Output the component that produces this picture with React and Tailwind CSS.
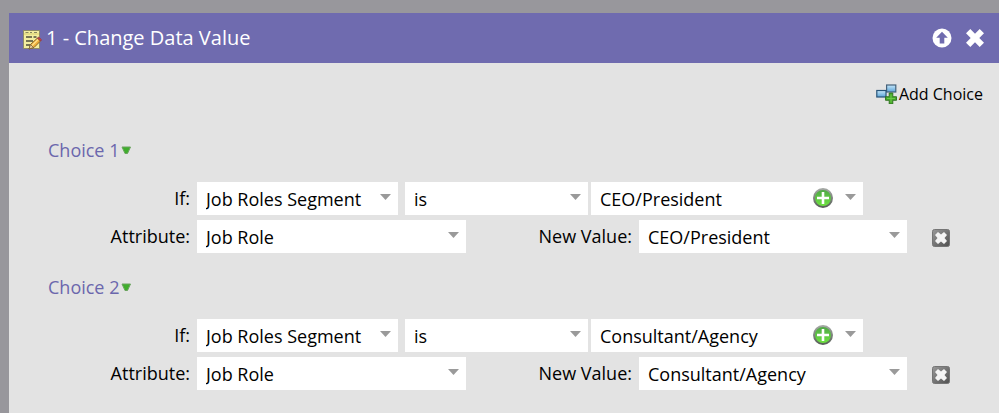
import { useId } from "react";

function NoteIcon() {
  return (
    <svg width="20" height="22" viewBox="0 0 20 22" aria-hidden="true" className="mt-1 shrink-0">
      <rect x="1.5" y="1.5" width="16" height="18" fill="#f4ee9f" stroke="#8f8b68" />
      <path d="M2 5h15" stroke="#e6de86" strokeWidth="2" />
      <path d="M3.500 3.500h3M8 3.500h2M12 3.500h3" stroke="#87865c" />
      <path d="M4 8h6M11.500 8h3M4 12h7M4 16h4" stroke="#4e4e3c" strokeWidth="1.600" />
      <path d="M7 20l1.500-4.500L15.500 9l3 3L12 18.500z" fill="#eeb03c" stroke="#8a6423" />
      <path d="M10 16.500l6-6" stroke="#ffe18a" strokeWidth="1.500" />
      <path d="M7 20l1.500-4.500 3 3z" fill="#ecd0a0" stroke="#6b5630" strokeWidth=".7" />
      <path d="M15.500 9l1.300-.8 2.700 2.600-1 1.200z" fill="#d8453e" stroke="#963b48" />
    </svg>
  );
}

function AddChoiceIcon() {
  const id = useId();
  return (
    <svg width="21" height="20" viewBox="0 0 21 20" aria-hidden="true" className="shrink-0">
      <defs>
        <linearGradient id={id} x2="0" y2="1">
          <stop stopColor="#c5e7fb" />
          <stop offset="1" stopColor="#5ba3d6" />
        </linearGradient>
      </defs>
      <rect x="10.600" y="1" width="9.200" height="7" fill={`url(#${id})`} stroke="#44617a" strokeWidth="1.200" />
      <rect x=".8" y="6.500" width="9.200" height="6.500" fill={`url(#${id})`} stroke="#285478" strokeWidth="1.200" />
      <path d="M13.200 9h3.600v3.700h3.700v3.600h-3.700V20h-3.600v-3.700H9.500v-3.600h3.700z" fill="#46a928" stroke="#2c701e" strokeWidth=".9" />
      <path d="M15 10.500v8M11 14.500h8" stroke="#6cc948" />
    </svg>
  );
}

function UpIcon() {
  return (
    <svg width="20" height="20" viewBox="0 0 20 20" aria-hidden="true">
      <circle cx="10" cy="10" r="9.500" fill="#fff" />
      <path d="M10 3.800l5.800 6h-3.500V15.500H7.700V9.800H4.200z" fill="#6f6baf" />
    </svg>
  );
}

function CloseIcon() {
  return (
    <svg width="18" height="18" viewBox="0 0 18 18" aria-hidden="true">
      <path d="M4.300 0L9 4.700 13.700 0 18 4.300 13.300 9 18 13.700 13.700 18 9 13.300 4.300 18 0 13.700 4.700 9 0 4.300z" fill="#fff" />
    </svg>
  );
}

function PlusIcon() {
  const id = useId();
  return (
    <svg width="20" height="20" viewBox="0 0 20 20" aria-hidden="true">
      <defs>
        <linearGradient id={id + "g"} x2="0" y2="1">
          <stop stopColor="#4fa548" />
          <stop offset="1" stopColor="#6fe63f" />
        </linearGradient>
        <linearGradient id={id + "r"} x2="0" y2="1">
          <stop stopColor="#a3a7a3" />
          <stop offset="1" stopColor="#596159" />
        </linearGradient>
      </defs>
      <circle cx="10" cy="10" r="9" fill={`url(#${id}g)`} stroke={`url(#${id}r)`} strokeWidth="2" />
      <path d="M10 4v12M4 10h12" stroke="#fff" strokeWidth="2.600" />
    </svg>
  );
}

function RemoveIcon() {
  const id = useId();
  return (
    <svg width="18" height="18" viewBox="0 0 18 18" aria-hidden="true">
      <defs>
        <linearGradient id={id} x2="1" y2="1">
          <stop stopColor="#9a9a9a" />
          <stop offset="1" stopColor="#505050" />
        </linearGradient>
      </defs>
      <rect x=".5" y=".5" width="17" height="17" rx="2" fill={`url(#${id})`} stroke="#757575" />
      <path d="M6 3l3 2.500L12 3l3 3-2.500 3 2.500 3-3 3-3-2.500L6 15l-3-3 2.500-3L3 6z" fill="#f4f4f4" />
    </svg>
  );
}

function SelectField({ id, label, value, width, onAdd }) {
  return (
    <div className={`relative h-[33px] shrink-0 ${width}`}>
      <select
        id={id}
        aria-label={label}
        defaultValue={value}
        className="block h-full w-full appearance-none rounded-none border-0 bg-white pt-px pr-7 pl-[9px] text-lg leading-[30px] text-black"
      >
        <option>{value}</option>
      </select>
      {onAdd && (
        <button type="button" aria-label="Add value" className="absolute top-[6px] right-[30px]">
          <PlusIcon />
        </button>
      )}
      <svg width="11" height="6" viewBox="0 0 11 6" aria-hidden="true" className="pointer-events-none absolute top-3 right-[7px]">
        <path d="M0 0h11L5.500 6z" fill="#9a9a9a" />
      </svg>
    </div>
  );
}

function Choice({ number, value }) {
  const id = useId();
  return (
    <section className="flex flex-col">
      <h2 className="mb-5 pl-[39px] text-lg leading-6 text-[#6b67ad]">
        <button type="button" className="flex items-center gap-0.5">
          Choice {number}
          <svg width="10" height="9" viewBox="0 0 10 9" aria-hidden="true">
            <path d="M1 1h8.500L6.500 7.500H4z" fill="#3fae2c" stroke="#6ba35f" />
          </svg>
        </button>
      </h2>
      <div className="flex flex-col gap-[5px] text-lg leading-8">
        <div className="flex">
          <label htmlFor={id + "if"} className="w-[188px] shrink-0 pr-[7px] text-right">If:</label>
          <SelectField id={id + "if"} value="Job Roles Segment" width="w-[201px] mr-[7px]" />
          <SelectField label="Operator" value="is" width="w-[183px] mr-[3px]" />
          <SelectField label="Segment" value={value} width="w-[272px]" onAdd />
        </div>
        <div className="flex">
          <label htmlFor={id + "attr"} className="w-[188px] shrink-0 pr-[7px] text-right">Attribute:</label>
          <SelectField id={id + "attr"} value="Job Role" width="w-[269px]" />
          <label htmlFor={id + "new"} className="w-[173px] shrink-0 pr-[7px] text-right">New Value:</label>
          <SelectField id={id + "new"} value={value} width="w-[268px]" />
          <button type="button" aria-label={`Remove choice ${number}`} className="ml-[25px] pt-[3px]">
            <RemoveIcon />
          </button>
        </div>
      </div>
    </section>
  );
}

export default function App() {
  return (
    <div className="flex min-h-screen flex-col bg-[#98979c] pt-[13px] pl-[9px] font-['Open_Sans',sans-serif] text-black">
      <header className="flex h-[50px] items-center bg-[#6f6baf] pr-[15px] pl-[13px] text-white">
        <NoteIcon />
        <h1 className="ml-1 text-xl">1 - Change Data Value</h1>
        <div className="ml-auto flex items-center gap-[14px]">
          <button type="button" aria-label="Move up"><UpIcon /></button>
          <button type="button" aria-label="Close"><CloseIcon /></button>
        </div>
      </header>
      <main className="flex grow flex-col bg-[#e3e3e3] pt-[19px]">
        <button type="button" className="mr-4 mb-8 flex items-center gap-0.5 self-end text-base leading-6">
          <AddChoiceIcon />
          Add Choice
        </button>
        <div className="flex flex-col gap-[22px]">
          <Choice number={1} value="CEO/President" />
          <Choice number={2} value="Consultant/Agency" />
        </div>
      </main>
    </div>
  );
}
